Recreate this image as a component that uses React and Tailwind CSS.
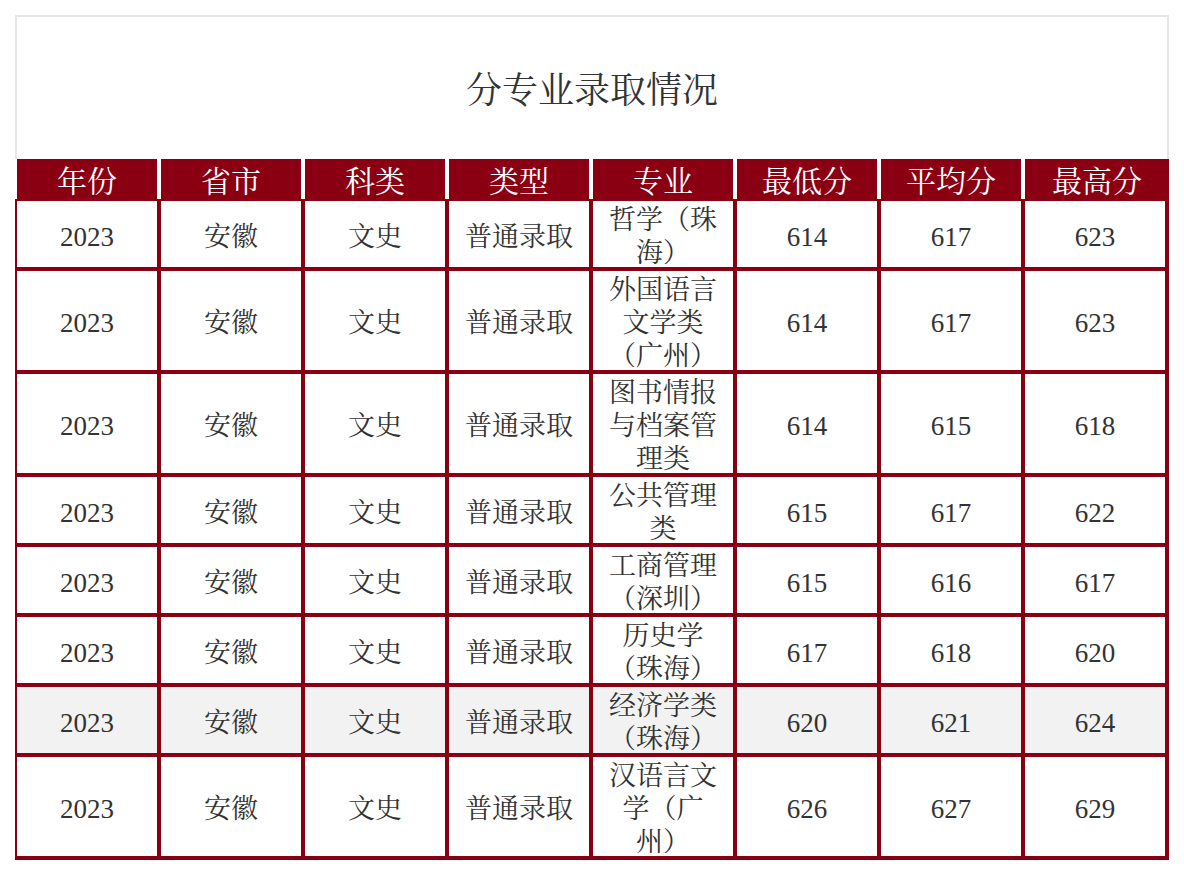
import React from "react";

const rows = [
  ["2023", "安徽", "文史", "普通录取", "哲学（珠海）", "614", "617", "623", false],
  ["2023", "安徽", "文史", "普通录取", "外国语言文学类（广州）", "614", "617", "623", false],
  ["2023", "安徽", "文史", "普通录取", "图书情报与档案管理类", "614", "615", "618", false],
  ["2023", "安徽", "文史", "普通录取", "公共管理类", "615", "617", "622", false],
  ["2023", "安徽", "文史", "普通录取", "工商管理（深圳）", "615", "616", "617", false],
  ["2023", "安徽", "文史", "普通录取", "历史学（珠海）", "617", "618", "620", false],
  ["2023", "安徽", "文史", "普通录取", "经济学类（珠海）", "620", "621", "624", true],
  ["2023", "安徽", "文史", "普通录取", "汉语言文学（广州）", "626", "627", "629", false],
];

const headers = ["年份", "省市", "科类", "类型", "专业", "最低分", "平均分", "最高分"];

const font = { fontFamily: '"Liberation Serif", "Noto Serif CJK SC", "Noto Sans CJK SC", serif' };

export default function App() {
  return (
    <div className="bg-white w-[1184px] h-[878px] pt-[15px] pl-[15px] [text-spacing-trim:space-all]" style={font}>
      <div className="w-[1154px]">
        <div className="h-[144px] border-t-2 border-x-2 border-[#e6e6e6] flex items-center justify-center">
          <h1 className="text-[36px] leading-none text-[#333] translate-y-[3px]">分专业录取情况</h1>
        </div>
        <div className="flex">
          {headers.map((h, i) => (
            <div
              key={h}
              className={
                "h-[40px] bg-[#8a0012] text-white text-[30px] leading-[40px] text-center border-l-2 border-white " +
                (i === 7 ? "w-[146px]" : "w-[144px] border-r-2")
              }
            >
              <span className="inline-block translate-y-[3px]">{h}</span>
            </div>
          ))}
        </div>
        {rows.map((r, ri) => (
          <div key={ri} className={"flex " + (r[8] ? "bg-[#f2f2f2]" : "bg-white")}>
            {r.slice(0, 8).map((c, ci) => (
              <div
                key={ci}
                className={
                  "border-2 border-[#8a0012] flex items-center justify-center text-center text-[#333] text-[27px] leading-[33px] px-[7px] py-0 " +
                  (ci === 7 ? "w-[146px] border-r-4 " : "w-[144px] ") +
                  (ri === rows.length - 1 ? "border-b-4" : "")
                }
              >
                <span className="translate-y-[3px] [text-spacing-trim:space-all]">{c}</span>
              </div>
            ))}
          </div>
        ))}
      </div>
    </div>
  );
}
